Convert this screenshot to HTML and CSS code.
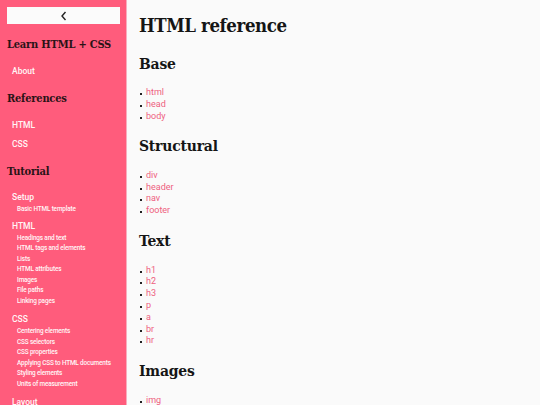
FILE: index.html
```html
<!DOCTYPE html>
<html lang="en">
<head>
<meta charset="utf-8">
<title>HTML reference</title>
<link rel="stylesheet" href="styles.css">
</head>
<body>
<div class="layout">
  <nav class="sidebar">
    <button class="back" aria-label="Back">
      <svg width="8" height="10" viewBox="0 0 8 10"><path d="M5.5 1 L2 5 L5.5 9" fill="none" stroke="#222" stroke-width="1.4"/></svg>
    </button>
    <h2 class="side-title first">Learn HTML + CSS</h2>
    <ul class="side-list flat">
      <li class="group"><a href="#">About</a></li>
    </ul>
    <h2 class="side-title">References</h2>
    <ul class="side-list flat">
      <li class="group"><a href="#">HTML</a></li>
      <li class="group"><a href="#">CSS</a></li>
    </ul>
    <h2 class="side-title">Tutorial</h2>
    <ul class="side-list">
      <li class="group setup"><a href="#">Setup</a>
        <ul class="sub-list">
          <li><a href="#">Basic HTML template</a></li>
        </ul>
      </li>
      <li class="group"><a href="#">HTML</a>
        <ul class="sub-list">
          <li><a href="#">Headings and text</a></li>
          <li><a href="#">HTML tags and elements</a></li>
          <li><a href="#">Lists</a></li>
          <li><a href="#">HTML attributes</a></li>
          <li><a href="#">Images</a></li>
          <li><a href="#">File paths</a></li>
          <li><a href="#">Linking pages</a></li>
        </ul>
      </li>
      <li class="group"><a href="#">CSS</a>
        <ul class="sub-list">
          <li><a href="#">Centering elements</a></li>
          <li><a href="#">CSS selectors</a></li>
          <li><a href="#">CSS properties</a></li>
          <li><a href="#">Applying CSS to HTML documents</a></li>
          <li><a href="#">Styling elements</a></li>
          <li><a href="#">Units of measurement</a></li>
        </ul>
      </li>
      <li class="group"><a href="#">Layout</a></li>
    </ul>
  </nav>
  <main class="content">
    <h1 class="page-title">HTML reference</h1>
    <h2 class="section-title">Base</h2>
    <ul class="tag-list">
      <li><a href="#">html</a></li>
      <li><a href="#">head</a></li>
      <li><a href="#">body</a></li>
    </ul>
    <h2 class="section-title">Structural</h2>
    <ul class="tag-list">
      <li><a href="#">div</a></li>
      <li><a href="#">header</a></li>
      <li><a href="#">nav</a></li>
      <li><a href="#">footer</a></li>
    </ul>
    <h2 class="section-title">Text</h2>
    <ul class="tag-list">
      <li><a href="#">h1</a></li>
      <li><a href="#">h2</a></li>
      <li><a href="#">h3</a></li>
      <li><a href="#">p</a></li>
      <li><a href="#">a</a></li>
      <li><a href="#">br</a></li>
      <li><a href="#">hr</a></li>
    </ul>
    <h2 class="section-title">Images</h2>
    <ul class="tag-list">
      <li><a href="#">img</a></li>
    </ul>
  </main>
</div>
</body>
</html>
```

FILE: styles.css
```css
* { box-sizing: border-box; }
html, body { margin: 0; padding: 0; height: 100%; overflow: hidden; }
body { background: #fafafa; font-family: Roboto, "Liberation Sans", sans-serif; }
.layout { display: flex; height: 405px; }
.sidebar {
  width: 127px;
  flex: 0 0 127px;
  background: #ff5c7c;
  border-right: 1px solid #f7aebe;
  padding: 7px 6px 0 7px;
  overflow: hidden;
}
.back {
  display: flex; align-items: center; justify-content: center;
  width: 113px; height: 17px;
  background: #fbfbfb; border: none; padding: 0; margin: 0;
}
.side-title {
  font-family: "DejaVu Serif Condensed", "DejaVu Serif", serif;
  font-stretch: condensed;
  font-weight: bold;
  font-size: 11px;
  letter-spacing: -0.2px;
  line-height: 16px;
  color: #2a1316;
  margin: 14px 0 11.5px 0;
  white-space: nowrap;
}
.side-title.first { margin-top: 13px; margin-bottom: 12px; }
.side-list, .sub-list { list-style: none; margin: 0; padding: 0; }
.side-list { padding-left: 5px; }
.side-list a {
  color: #fff6f7; text-decoration: none;
  font-family: Roboto, sans-serif;
  font-weight: 500;
}
.group { margin-bottom: 7px; }
.group.setup { margin-bottom: 5px; }
.flat .group { margin-bottom: 7px; }
.group:last-child, .flat .group:last-child { margin-bottom: 0; }
.group > a { font-size: 8.5px; line-height: 12px; display: block; }
.sub-list { padding-left: 5px; margin-top: 1px; }
.sub-list li { line-height: 10.5px; }
.sub-list a { font-size: 6.4px; letter-spacing: -0.15px; display: block; line-height: 10.5px; white-space: nowrap; }
.content { flex: 1; padding: 13px 12px 0 12px; overflow: hidden; }
.page-title {
  font-family: "DejaVu Serif Condensed", "DejaVu Serif", serif;
  font-stretch: condensed;
  font-weight: bold; font-size: 18.5px; line-height: 26px;
  letter-spacing: -0.4px;
  color: #151515; margin: 0 0 14.5px 0;
}
.section-title {
  font-family: "DejaVu Serif Condensed", "DejaVu Serif", serif;
  font-stretch: condensed;
  font-weight: bold; font-size: 15.5px; line-height: 20px;
  letter-spacing: -0.2px;
  color: #151515; margin: 0 0 13.5px 0;
}
.tag-list { margin: 0 0 14px 0; padding-left: 7px; list-style: none; }
.tag-list li { font-size: 9px; line-height: 11.8px; position: relative; }
.tag-list li::before {
  content: ""; position: absolute; left: -6px; top: 6px;
  width: 2px; height: 2px; background: #222;
}
.tag-list a { color: #ee5f80; text-decoration: none; }
```
